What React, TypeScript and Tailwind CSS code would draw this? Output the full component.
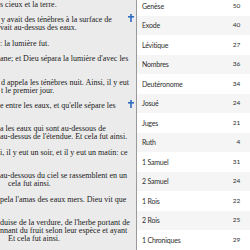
import React from "react";

const verses: { lines: string[]; indent?: number[]; cross?: boolean }[] = [
  { lines: ["s cieux et la terre."] },
  { lines: ["y avait des ténèbres à la surface de", "vait au-dessus des eaux."], indent: [1, 0], cross: true },
  { lines: [": la lumière fut."] },
  { lines: ["ane; et Dieu sépara la lumière d'avec les", ""] },
  { lines: ["d appela les ténèbres nuit. Ainsi, il y eut", "t le premier jour."], indent: [1, 1] },
  { lines: ["e entre les eaux, et qu'elle sépare les", ""], cross: true },
  { lines: ["a les eaux qui sont au-dessous de", "au-dessus de l'étendue. Et cela fut ainsi."] },
  { lines: ["i, il y eut un soir, et il y eut un matin: ce", ""] },
  { lines: ["au-dessous du ciel se rassemblent en un", "cela fut ainsi."], indent: [0, 8] },
  { lines: ["pela l'amas des eaux mers. Dieu vit que", ""] },
  {
    lines: ["duise de la verdure, de l'herbe portant de", "nnant du fruit selon leur espèce et ayant", "Et cela fut ainsi."],
    indent: [0, 0, 8],
  },
];

const books: [string, number][] = [
  ["Genèse", 50],
  ["Exode", 40],
  ["Lévitique", 27],
  ["Nombres", 36],
  ["Deutéronome", 34],
  ["Josué", 24],
  ["Juges", 21],
  ["Ruth", 4],
  ["1 Samuel", 31],
  ["2 Samuel", 24],
  ["1 Rois", 22],
  ["2 Rois", 25],
  ["1 Chroniques", 29],
];

function Cross() {
  return (
    <svg width="6" height="8" viewBox="0 0 6 8" className="absolute left-[128px] top-[-2px]">
      <rect x="2.2" y="0" width="1.6" height="8" fill="#2f6cc0" />
      <rect x="0" y="2" width="6" height="1.6" fill="#2f6cc0" />
    </svg>
  );
}

export default function App() {
  return (
    <div className="w-[250px] h-[250px] overflow-hidden flex bg-[#ebebeb]">
      <div
        className="w-[136px] shrink-0 overflow-hidden pt-[1px] text-[#1a1a1a] text-[8px] leading-[8px]"
        style={{ fontFamily: '"Liberation Serif", "Times New Roman", serif' }}
      >
        {verses.map((v, i) => (
          <div key={i} className="relative mb-[7.4px]">
            {v.cross && <Cross />}
            {v.lines.map((l, j) => (
              <div
                key={j}
                className="whitespace-nowrap h-[8px]"
                style={{ paddingLeft: v.indent ? v.indent[j] : 0 }}
              >
                {l || "\u00a0"}
              </div>
            ))}
          </div>
        ))}
      </div>
      <div
        className="flex-1 border-l border-[#9a9a9a] bg-white -mt-[4px] text-[#2e2e2e] text-[7px] tracking-[-0.2px]"
        style={{ fontFamily: 'Lato, "Open Sans", sans-serif' }}
      >
        {books.map(([name, n], i) => (
          <div
            key={name}
            className={`h-[19.5px] flex items-center justify-between pl-[5px] pr-[10px] ${
              i % 2 === 1 ? "bg-[#f5f5f5]" : "bg-white"
            }`}
          >
            <span>{name}</span>
            <span className="text-[6.5px]">{n}</span>
          </div>
        ))}
      </div>
    </div>
  );
}
